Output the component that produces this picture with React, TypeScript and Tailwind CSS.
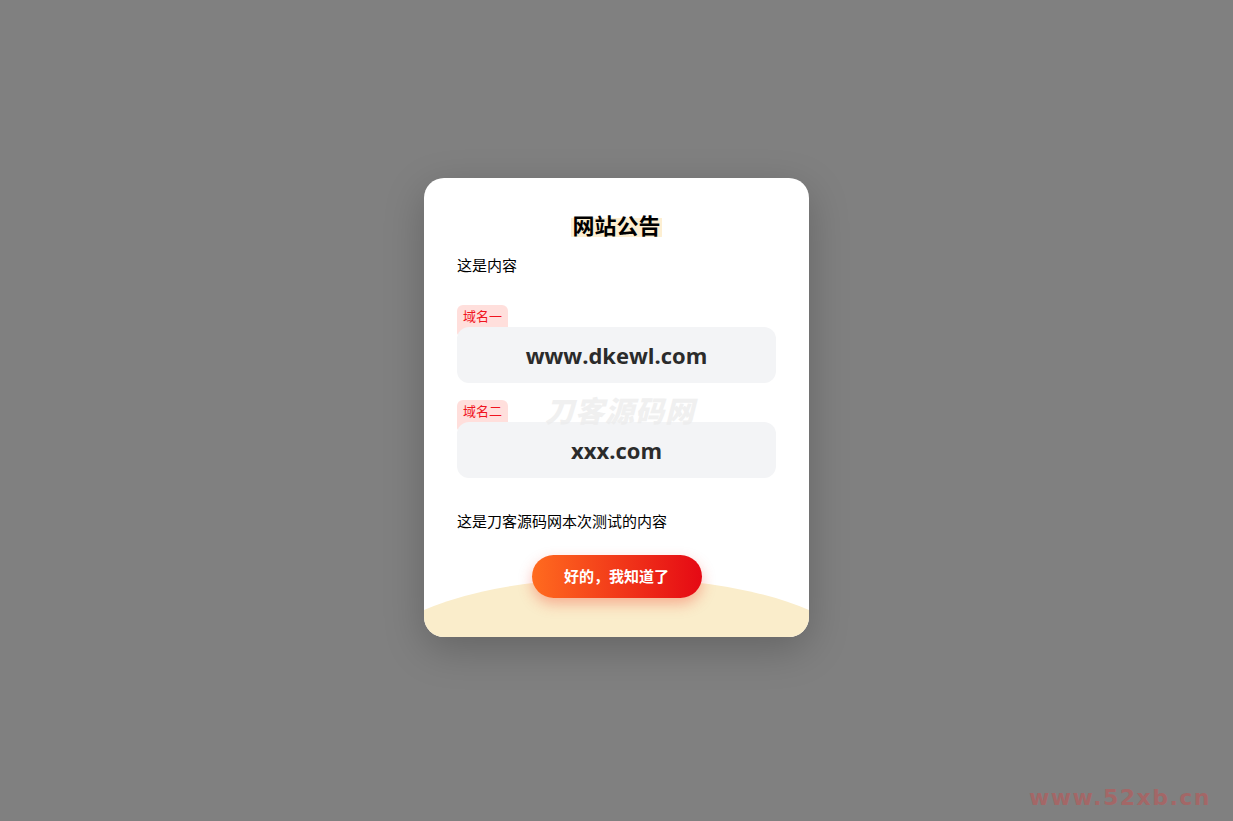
const cjk = "font-['Noto_Sans_CJK_SC',sans-serif]";

const DomainRow = ({ label, domain }: { label: string; domain: string }) => (
  <div className="flex flex-col items-start">
    <span className={`${cjk} bg-[#ffdfdc] text-[#f0141e] text-[13px] leading-[22px] px-[6px] pb-[8px] -mb-[8px] rounded-t-[6px] rounded-b-[2px]`}>
      {label}
    </span>
    <div className="relative w-full h-[56px] rounded-[12px] bg-[#f3f4f6] flex items-center justify-center">
      <span className="font-['Open_Sans',sans-serif] font-bold text-[22px] text-[#2b2b2b]">{domain}</span>
    </div>
  </div>
);

export default function App() {
  return (
    <div className="relative min-h-screen w-full bg-[#808080] flex items-start justify-center overflow-hidden">
      <div className="relative mt-[178px] w-[385px] h-[459px] rounded-[20px] bg-white overflow-hidden shadow-[0_12px_40px_rgba(0,0,0,0.22)]">
        <div className="absolute left-[-48px] top-[400px] w-[481px] h-[160px] rounded-[50%] bg-[#faedcb]" />
        <div className="relative flex flex-col px-[33px] pt-[30px]">
          <h2 className={`${cjk} text-center text-[22px] leading-[32px] font-bold text-black`}>
            <span className="bg-[linear-gradient(transparent_30%,#fdefd2_30%,#fdefd2_92%,transparent_92%)] rounded-[4px] px-[1px]">网站公告</span>
          </h2>
          <p className={`${cjk} mt-[15px] text-[15px] leading-[20px] text-black`}>这是内容</p>
          <div className="mt-[30px] flex flex-col gap-[17px]">
            <DomainRow label="域名一" domain="www.dkewl.com" />
            <DomainRow label="域名二" domain="xxx.com" />
          </div>
          <p className={`${cjk} mt-[33px] text-[15px] leading-[20px] text-black`}>这是刀客源码网本次测试的内容</p>
          <div className="mt-[24px] flex justify-center">
            <button className={`${cjk} w-[170px] h-[43px] rounded-full bg-[linear-gradient(90deg,#ff6b1f,#e50914)] text-white font-bold text-[15px] shadow-[0_6px_14px_rgba(240,60,40,0.35)]`}>
              好的，我知道了
            </button>
          </div>
        </div>
        <span className={`${cjk} pointer-events-none absolute left-[121px] top-[216px] text-[29px] leading-[30px] font-black italic text-[#ececec]/80 tracking-[1px]`}>
          刀客源码网
        </span>
      </div>
      <span className="absolute right-[22px] bottom-[10px] font-['DejaVu_Sans',sans-serif] font-bold text-[22px] leading-[26px] tracking-[1.5px] text-[#a36767]">
        www.52xb.cn
      </span>
    </div>
  );
}
